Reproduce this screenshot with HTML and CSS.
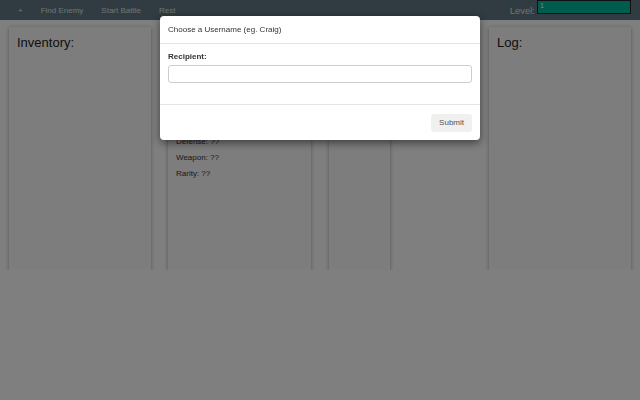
FILE: index.html
```html
<!DOCTYPE html>
<html lang="en">
<head>
  <meta charset="UTF-8">
  <title>Battle Game</title>
  <link rel="stylesheet" href="styles.css">
</head>
<body>

  <!-- Top navigation -->
  <nav class="navbar">
    <a href="#" class="nav-link">+</a>
    <a href="#" class="nav-link">Find Enemy</a>
    <a href="#" class="nav-link">Start Battle</a>
    <a href="#" class="nav-link">Rest</a>
    <div class="level">
      <label for="level">Level:</label>
      <input type="text" id="level" value="1" />
    </div>
  </nav>

  <!-- Game panels -->
  <main class="columns">
    <div class="col">
      <div class="card card-tall">
        <h2>Inventory:</h2>
      </div>
    </div>
    <div class="col">
      <!-- top of this card sits under the modal -->
      <div class="card card-tall card-stats">
        <p>Defense: ??</p>
        <p>Weapon: ??</p>
        <p>Rarity: ??</p>
      </div>
    </div>
    <div class="col">
      <div class="card card-tall card-narrow"></div>
    </div>
    <div class="col">
      <div class="card card-tall">
        <h2>Log:</h2>
      </div>
    </div>
  </main>

  <!-- Username modal -->
  <div class="backdrop">
    <div class="modal">
      <div class="modal-header">Choose a Username (eg. Craig)</div>
      <div class="modal-body">
        <label for="recipient">Recipient:</label>
        <input type="text" id="recipient" />
      </div>
      <div class="modal-footer">
        <button>Submit</button>
      </div>
    </div>
  </div>

</body>
</html>
```

FILE: styles.css
```css
body {
  margin: 0;
  font-family: 'Liberation Sans', Arial, sans-serif;
  background-color: #fff;
  color: #333;
}

.navbar {
  height: 20px;
  background-color: #607882;
  display: flex;
  align-items: center;
  padding-left: 18px;
  gap: 18px;
}

.nav-link {
  color: #fff;
  font-size: 8px;
  text-decoration: none;
  opacity: 0.8;
}

.level {
  margin-left: auto;
  margin-right: 9px;
  display: flex;
  align-items: flex-start;
  align-self: flex-start;
  gap: 2px;
}

.level label {
  color: #fff;
  opacity: 0.8;
  font-size: 9.5px;
  margin-top: 5px;
}

.level input {
  width: 94px;
  height: 14px;
  box-sizing: border-box;
  padding: 0 2px 4px;
  border: 1px solid #222;
  background-color: #00b898;
  color: #fff;
  font-size: 7px;
  font-family: inherit;
  line-height: 8px;
}

.columns {
  display: grid;
  grid-template-columns: repeat(4, 160px);
  padding-top: 7px;
}

.col {
  padding: 0 9px;
}

.col:nth-child(2) {
  padding-left: 8px;
}

.card {
  background-color: #fafafa;
  box-shadow: 0 1px 4px rgba(0, 0, 0, 0.35);
  box-sizing: border-box;
  padding: 7px 8px;
}

.card-tall {
  height: 243px;
}

.card-narrow {
  width: 61px;
}

.card-stats {
  padding-top: 107px;
}

.card h2 {
  margin: 0;
  font-size: 13px;
  font-weight: normal;
  line-height: 18px;
  color: #222;
}

.card p {
  margin: 0;
  font-size: 8px;
  line-height: 16px;
  color: #333;
}

.backdrop {
  position: fixed;
  inset: 0;
  background-color: rgba(0, 0, 0, 0.5);
  display: flex;
  justify-content: center;
  align-items: flex-start;
}

.modal {
  margin-top: 16px;
  width: 320px;
  background-color: #fff;
  border-radius: 4px;
  box-shadow: 0 3px 9px rgba(0, 0, 0, 0.5);
}

.modal-header {
  padding: 9px 8px 8px;
  font-size: 8px;
  line-height: 10px;
  color: #333;
  border-bottom: 1px solid #e5e5e5;
}

.modal-body {
  padding: 8px 8px 21px;
}

.modal-body label {
  display: block;
  font-size: 8px;
  font-weight: bold;
  color: #333;
  margin-bottom: 3px;
}

.modal-body input {
  width: 100%;
  height: 18px;
  box-sizing: border-box;
  border: 1px solid #ccc;
  border-radius: 3px;
  margin: 0;
}

.modal-footer {
  border-top: 1px solid #e5e5e5;
  padding: 9px 8px 8px;
  display: flex;
  justify-content: flex-end;
}

.modal-footer button {
  background-color: #f0f0f0;
  border: none;
  border-radius: 3px;
  font-family: inherit;
  font-size: 8px;
  color: #555;
  padding: 0 8px;
  height: 18px;
  cursor: pointer;
}
```
